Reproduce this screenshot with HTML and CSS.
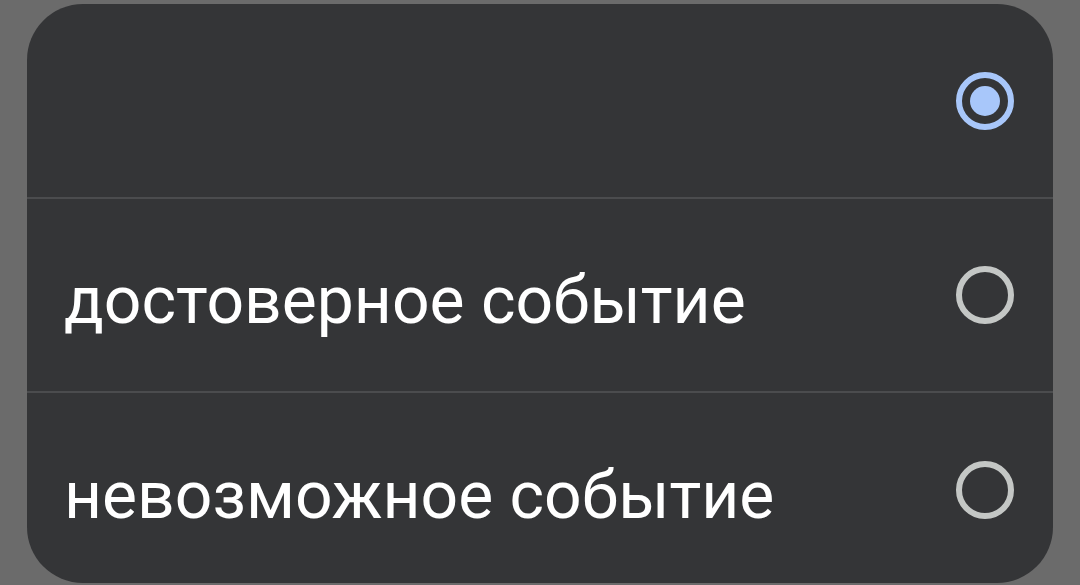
FILE: index.html
```html
<!DOCTYPE html>
<html lang="ru">
<head>
<meta charset="utf-8">
<link rel="stylesheet" href="styles.css">
</head>
<body>
<div class="page">
  <div class="card">
    <div class="row row-first">
      <span class="label"></span>
      <span class="radio checked"></span>
    </div>
    <div class="divider"></div>
    <div class="row row-mid">
      <span class="label">достоверное событие</span>
      <span class="radio"></span>
    </div>
    <div class="divider"></div>
    <div class="row row-last">
      <span class="label">невозможное событие</span>
      <span class="radio"></span>
    </div>
  </div>
</div>
</body>
</html>
```
FILE: styles.css
```css
html, body {
  margin: 0;
  padding: 0;
  background: #6b6b6b;
  width: 1080px;
  height: 585px;
  overflow: hidden;
}
.page {
  padding: 4px 27px 0 27px;
}
.card {
  background: #343537;
  border-radius: 56px;
  height: 579px;
  display: flex;
  flex-direction: column;
  overflow: hidden;
}
.row {
  display: flex;
  align-items: center;
  justify-content: space-between;
  padding: 0 39px 0 37px;
  box-sizing: border-box;
  flex: none;
}
.row-first {
  height: 193px;
}
.row-mid {
  height: 192px;
}
.row-last {
  height: 190px;
  padding-top: 4px;
}
.divider {
  height: 2px;
  background: #4b4c4e;
  flex: none;
}
.label {
  font-family: Roboto, "Noto Sans", sans-serif;
  font-size: 66px;
  color: #ffffff;
  padding-top: 10px;
}
.radio {
  width: 46px;
  height: 46px;
  border-radius: 50%;
  border: 6px solid #c4c7c5;
  box-sizing: content-box;
  position: relative;
}
.radio.checked {
  border-color: #a8c7fa;
}
.radio.checked::after {
  content: "";
  position: absolute;
  left: 8px;
  top: 8px;
  width: 30px;
  height: 30px;
  border-radius: 50%;
  background: #a8c7fa;
}
```
